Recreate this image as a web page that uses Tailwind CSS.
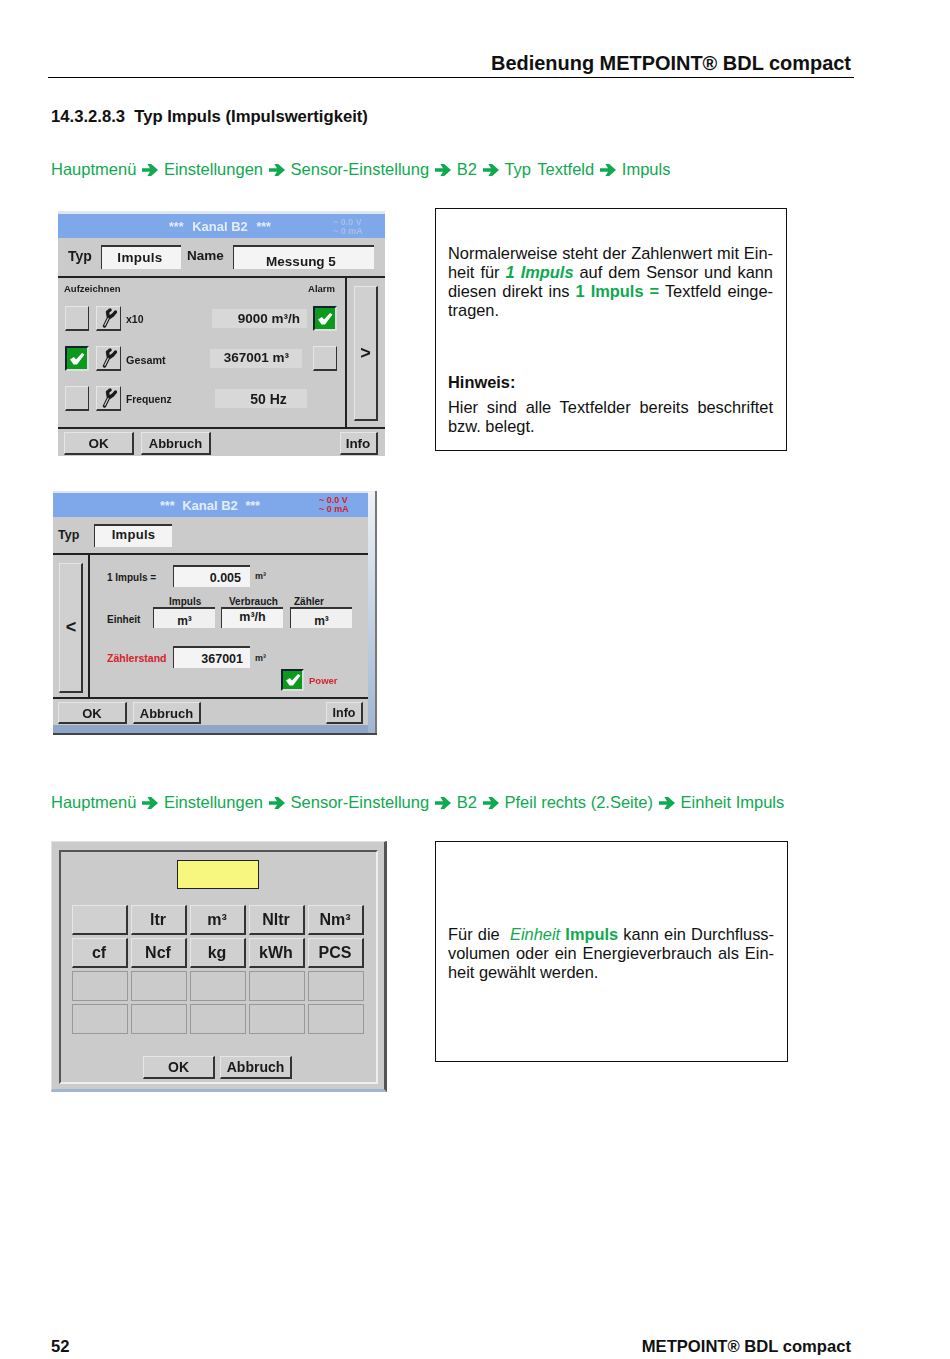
<!DOCTYPE html>
<html lang="de">
<head>
  <meta charset="UTF-8" />
  <title>Bedienung METPOINT BDL compact</title>
  <script src="https://cdn.jsdelivr.net/npm/@tailwindcss/browser@4"></script>
</head>
<body class="bg-white">
<div class="w-[950px] h-[1359px] flex flex-col font-['Liberation_Sans',Arial,sans-serif] text-[#111] overflow-hidden">

  <!-- Kopfzeile -->
  <div class="ml-[48px] w-[806px] h-[78px] flex items-end justify-end border-b border-black pr-[3px] pb-[2px]">
    <span class="text-[19.95px] leading-[23px] font-bold">Bedienung METPOINT® BDL compact</span>
  </div>

  <h2 class="ml-[51px] mt-[29px] text-[16.65px] leading-[19px] font-bold">14.3.2.8.3&nbsp; Typ Impuls (Impulswertigkeit)</h2>

  <!-- Pfad 1 -->
  <div class="ml-[51px] mt-[34px] h-[19px] flex items-center gap-[5.8px] text-[16.5px] leading-[19px] text-[#0fa950]">
    <span>Hauptmenü</span>
    <svg width="16" height="12" viewBox="0 0 16 12"><path d="M0 4.2h8L5.4 0h3.8L16 6l-6.8 6H5.4L8 7.8H0z" fill="#0fa950"/></svg>
    <span>Einstellungen</span>
    <svg width="16" height="12" viewBox="0 0 16 12"><path d="M0 4.2h8L5.4 0h3.8L16 6l-6.8 6H5.4L8 7.8H0z" fill="#0fa950"/></svg>
    <span>Sensor-Einstellung</span>
    <svg width="16" height="12" viewBox="0 0 16 12"><path d="M0 4.2h8L5.4 0h3.8L16 6l-6.8 6H5.4L8 7.8H0z" fill="#0fa950"/></svg>
    <span>B2</span>
    <svg width="16" height="12" viewBox="0 0 16 12"><path d="M0 4.2h8L5.4 0h3.8L16 6l-6.8 6H5.4L8 7.8H0z" fill="#0fa950"/></svg>
    <span class="[word-spacing:2px]">Typ Textfeld</span>
    <svg width="16" height="12" viewBox="0 0 16 12"><path d="M0 4.2h8L5.4 0h3.8L16 6l-6.8 6H5.4L8 7.8H0z" fill="#0fa950"/></svg>
    <span>Impuls</span>
  </div>

  <!-- Abschnitt 1 -->
  <div class="mt-[29px] flex items-start">
    <!-- Bildschirm Kanal B2, Seite 1 -->
    <div class="ml-[58px] mt-[3px] w-[327px] h-[245px] bg-[#cbcbcb] border-t-[3px] border-[#dfe6f2] flex flex-col text-[#1a1a1a] blur-[0.3px]">
      <div class="h-[24px] bg-[#7fa8ea] flex items-center">
        <div class="ml-[111px] w-[164px] pr-[62px] pt-[2px] flex justify-between items-center font-bold text-[#e4ecfa]">
          <span class="text-[12.5px]">***</span><span class="text-[13px]">Kanal B2</span><span class="text-[12.5px]">***</span>
        </div>
        <div class="pt-[1px] text-[9px] leading-[9px] font-bold text-[#a8bfe6]"><p>~ 0.0 V</p><p>~ 0 mA</p></div>
      </div>
      <div class="h-[40px] flex items-center border-b-2 border-[#222]">
        <span class="ml-[10px] w-[33px] pb-[2px] text-[14px] font-bold">Typ</span>
        <div class="w-[80px] h-[24px] bg-[#f4f4f4] border-t-2 border-l border-[#333] flex items-center justify-center text-[13.5px] font-bold tracking-[0.3px] pr-[3px]">Impuls</div>
        <span class="ml-[6px] w-[46px] pb-[1px] text-[13.5px] font-bold">Name</span>
        <div class="w-[141px] h-[24px] bg-[#f4f4f4] border-t-2 border-l border-[#333] flex items-center justify-center text-[13.5px] font-bold pt-[8px] pr-[6px]">Messung 5</div>
      </div>
      <div class="h-[151px] flex border-b-2 border-[#222]">
        <div class="w-[289px] border-r-2 border-[#222] flex flex-col">
          <div class="mt-[5px] h-[12px] flex justify-between pl-[6px] pr-[10px] text-[9.5px] leading-[12px] font-bold"><span>Aufzeichnen</span><span>Alarm</span></div>
          <div class="mt-[11px] h-[25px] flex items-center">
            <div class="ml-[7px] w-[24px] h-[25px] bg-[#d0d0d0] border-r border-b-2 border-t border-l border-r-[#333] border-b-[#333] border-t-[#e6e6e6] border-l-[#e6e6e6]"></div>
            <div class="ml-[7px] w-[25px] h-[25px] bg-[#d0d0d0] border-r border-b-2 border-t border-l border-r-[#333] border-b-[#333] border-t-[#e6e6e6] border-l-[#e6e6e6] flex items-center justify-center">
              <svg width="16" height="20" viewBox="0 0 16 20" fill="none" stroke-linecap="round" stroke-linejoin="round"><path d="M3.5 18 L7.5 10 L6.5 4 L9 2 M7.5 10 L12 7 L14.5 4" stroke="#1c1c1c" stroke-width="3.4"/><path d="M3.8 17.2 L7.2 10.4" stroke="#d8d8d8" stroke-width="1.1"/></svg>
            </div>
            <span class="ml-[5px] w-[86px] pt-[3px] text-[10.5px] font-bold">x10</span>
            <div class="w-[95px] h-[19px] bg-[#d8d8d8] flex items-center justify-end pr-[7px] pt-[1px] text-[13.5px] font-bold">9000 m³/h</div>
            <div class="ml-[6px] w-[24px] h-[25px] bg-[#0b9a1c] border-2 border-[#123] border-r-[#ddd] border-b-[#ddd] flex items-center justify-center">
              <svg width="16" height="13" viewBox="0 0 16 13"><path d="M1 7.5 L5 5 L7 7.5 L13 1 L15.5 2.5 L8 12.5 L4.5 12.5z" fill="#fff"/></svg>
            </div>
          </div>
          <div class="mt-[15px] h-[25px] flex items-center">
            <div class="ml-[7px] w-[24px] h-[25px] bg-[#0b9a1c] border-2 border-[#123] border-r-[#ddd] border-b-[#ddd] flex items-center justify-center">
              <svg width="16" height="13" viewBox="0 0 16 13"><path d="M1 7.5 L5 5 L7 7.5 L13 1 L15.5 2.5 L8 12.5 L4.5 12.5z" fill="#fff"/></svg>
            </div>
            <div class="ml-[7px] w-[25px] h-[25px] bg-[#d0d0d0] border-r border-b-2 border-t border-l border-r-[#333] border-b-[#333] border-t-[#e6e6e6] border-l-[#e6e6e6] flex items-center justify-center">
              <svg width="16" height="20" viewBox="0 0 16 20" fill="none" stroke-linecap="round" stroke-linejoin="round"><path d="M3.5 18 L7.5 10 L6.5 4 L9 2 M7.5 10 L12 7 L14.5 4" stroke="#1c1c1c" stroke-width="3.4"/><path d="M3.8 17.2 L7.2 10.4" stroke="#d8d8d8" stroke-width="1.1"/></svg>
            </div>
            <span class="ml-[5px] w-[84px] pt-[3px] text-[10.8px] font-bold">Gesamt</span>
            <div class="w-[92px] h-[19px] bg-[#d8d8d8] flex items-center justify-end pr-[13px] text-[13.5px] font-bold">367001 m³</div>
            <div class="ml-[11px] w-[24px] h-[25px] bg-[#d0d0d0] border-r border-b-2 border-t border-l border-r-[#333] border-b-[#333] border-t-[#e6e6e6] border-l-[#e6e6e6]"></div>
          </div>
          <div class="mt-[15px] h-[25px] flex items-center">
            <div class="ml-[7px] w-[24px] h-[25px] bg-[#d0d0d0] border-r border-b-2 border-t border-l border-r-[#333] border-b-[#333] border-t-[#e6e6e6] border-l-[#e6e6e6]"></div>
            <div class="ml-[7px] w-[25px] h-[25px] bg-[#d0d0d0] border-r border-b-2 border-t border-l border-r-[#333] border-b-[#333] border-t-[#e6e6e6] border-l-[#e6e6e6] flex items-center justify-center">
              <svg width="16" height="20" viewBox="0 0 16 20" fill="none" stroke-linecap="round" stroke-linejoin="round"><path d="M3.5 18 L7.5 10 L6.5 4 L9 2 M7.5 10 L12 7 L14.5 4" stroke="#1c1c1c" stroke-width="3.4"/><path d="M3.8 17.2 L7.2 10.4" stroke="#d8d8d8" stroke-width="1.1"/></svg>
            </div>
            <span class="ml-[5px] w-[89px] pt-[3px] text-[10.3px] font-bold">Frequenz</span>
            <div class="w-[92px] h-[19px] bg-[#d8d8d8] flex items-center justify-center pl-[15px] pt-[1px] text-[14px] font-bold">50 Hz</div>
          </div>
        </div>
        <div class="ml-[7px] mt-[8px] w-[24px] h-[135px] bg-[#d0d0d0] border-t border-l border-r-2 border-b-2 border-t-[#e6e6e6] border-l-[#e6e6e6] border-r-[#333] border-b-[#333] flex items-center justify-center text-[18px] font-bold">&gt;</div>
      </div>
      <div class="flex-1 flex items-start pt-[3px]">
        <div class="ml-[6px] w-[70px] h-[23px] bg-[#d0d0d0] border-t border-l border-r-2 border-b-2 border-t-[#e6e6e6] border-l-[#e6e6e6] border-r-[#333] border-b-[#333] flex items-center justify-center pt-[2px] text-[13.5px] font-bold">OK</div>
        <div class="ml-[7px] w-[70px] h-[23px] bg-[#d0d0d0] border-t border-l border-r-2 border-b-2 border-t-[#e6e6e6] border-l-[#e6e6e6] border-r-[#333] border-b-[#333] flex items-center justify-center pt-[2px] text-[13px] font-bold">Abbruch</div>
        <div class="ml-[129px] w-[38px] h-[23px] bg-[#d0d0d0] border-t border-l border-r-2 border-b-2 border-t-[#e6e6e6] border-l-[#e6e6e6] border-r-[#333] border-b-[#333] flex items-center justify-center pt-[2px] text-[13.5px] font-bold pr-[1px]">Info</div>
      </div>
    </div>

    <!-- Hinweis rechts -->
    <div class="ml-[50px] w-[352px] h-[243px] border border-[#111] pl-[12px] pr-[13px] pt-[35px] text-[16.4px] leading-[19px]">
      <p class="[text-align-last:justify]">Normalerweise steht der Zahlenwert mit Ein-</p>
      <p class="[text-align-last:justify]">heit für <b class="italic text-[#0fa950]">1 Impuls</b> auf dem Sensor und kann</p>
      <p class="[text-align-last:justify]">diesen direkt ins <b class="text-[#0fa950]">1 Impuls =</b> Textfeld einge-</p>
      <p>tragen.</p>
      <p class="mt-[53px] font-bold">Hinweis:</p>
      <p class="mt-[6px] [text-align-last:justify]">Hier sind alle Textfelder bereits beschriftet</p>
      <p>bzw. belegt.</p>
    </div>
  </div>

  <!-- Bildschirm Kanal B2, Seite 2 -->
  <div class="ml-[53px] mt-[35px] w-[324px] h-[244px] flex border-b-2 border-b-[#444] text-[#1a1a1a] blur-[0.3px]">
    <div class="w-[315px] bg-[#cbcbcb] border-t-2 border-[#dfe6f2] flex flex-col">
      <div class="h-[24px] bg-[#7fa8ea] flex items-center">
        <div class="ml-[107px] w-[159px] pr-[59px] pt-[2px] flex justify-between items-center font-bold text-[#e4ecfa]">
          <span class="text-[12.5px]">***</span><span class="text-[13px]">Kanal B2</span><span class="text-[12.5px]">***</span>
        </div>
        <div class="text-[9px] leading-[9px] font-bold text-[#d8202a]"><p>~ 0.0 V</p><p>~ 0 mA</p></div>
      </div>
      <div class="h-[38px] flex items-center border-b-2 border-[#222]">
        <span class="ml-[5px] w-[36px] text-[12.5px] font-bold">Typ</span>
        <div class="w-[78px] h-[23px] bg-[#f4f4f4] border-t-2 border-l border-[#333] flex items-center justify-center text-[13px] font-bold tracking-[0.3px] pb-[3px]">Impuls</div>
      </div>
      <div class="h-[144px] flex border-b-2 border-[#222]">
        <div class="w-[37px] border-r-2 border-[#222] pl-[6px] pt-[8px]">
          <div class="w-[24px] h-[130px] bg-[#d0d0d0] border-t border-l border-r-2 border-b-2 border-t-[#e6e6e6] border-l-[#e6e6e6] border-r-[#333] border-b-[#333] flex items-center justify-center pl-[1px] text-[18px] font-bold">&lt;</div>
        </div>
        <div class="flex-1 flex flex-col pl-[17px]">
          <div class="mt-[9px] h-[23px] flex items-center">
            <span class="w-[66px] pt-[3px] text-[10px] font-bold">1 Impuls =</span>
            <div class="w-[77px] h-[22px] bg-[#f4f4f4] border-t-2 border-l border-[#333] flex items-center justify-end pr-[9px] pt-[3px] text-[12.5px] font-bold">0.005</div>
            <span class="ml-[5px] pt-[3px] text-[9px] font-bold">m³</span>
          </div>
          <div class="mt-[9px] h-[10px] flex text-[10px] leading-[12px] font-bold">
            <span class="ml-[62px] w-[60px]">Impuls</span>
            <span class="w-[65px]">Verbrauch</span>
            <span>Zähler</span>
          </div>
          <div class="h-[22px] flex items-center">
            <span class="w-[46px] pt-[4px] text-[10px] font-bold">Einheit</span>
            <div class="w-[62px] h-[21px] bg-[#f0f0f0] border-t-2 border-l border-[#333] flex items-center justify-center pt-[5px] text-[12px] font-bold">m³</div>
            <div class="ml-[6px] w-[62px] h-[21px] bg-[#f4f4f4] border-t-2 border-l border-[#333] flex items-center justify-center text-[12.5px] font-bold pb-[1px]">m³/h</div>
            <div class="ml-[7px] w-[62px] h-[21px] bg-[#f0f0f0] border-t-2 border-l border-[#333] flex items-center justify-center pt-[5px] text-[12px] font-bold">m³</div>
          </div>
          <div class="mt-[17px] h-[23px] flex items-center">
            <span class="w-[66px] pt-[4px] text-[10.5px] font-bold text-[#d8202a]">Zählerstand</span>
            <div class="w-[77px] h-[22px] bg-[#f4f4f4] border-t-2 border-l border-[#333] flex items-center justify-end pr-[7px] pt-[3px] text-[12.5px] font-bold">367001</div>
            <span class="ml-[5px] pt-[4px] text-[9px] font-bold">m³</span>
          </div>
          <div class="h-[23px] flex items-center">
            <div class="ml-[174px] w-[23px] h-[22px] bg-[#0b9a1c] border-2 border-[#123] border-r-[#ddd] border-b-[#ddd] flex items-center justify-center">
              <svg width="16" height="13" viewBox="0 0 16 13"><path d="M1 7.5 L5 5 L7 7.5 L13 1 L15.5 2.5 L8 12.5 L4.5 12.5z" fill="#fff"/></svg>
            </div>
            <span class="ml-[5px] pt-[3px] text-[9.5px] font-bold text-[#d8202a]">Power</span>
          </div>
        </div>
      </div>
      <div class="h-[26px] flex items-start pt-[3px]">
        <div class="ml-[5px] w-[69px] h-[22px] bg-[#d0d0d0] border-t border-l border-r-2 border-b-2 border-t-[#e6e6e6] border-l-[#e6e6e6] border-r-[#333] border-b-[#333] flex items-center justify-center pt-[2px] text-[13px] font-bold">OK</div>
        <div class="ml-[6px] w-[68px] h-[22px] bg-[#d0d0d0] border-t border-l border-r-2 border-b-2 border-t-[#e6e6e6] border-l-[#e6e6e6] border-r-[#333] border-b-[#333] flex items-center justify-center pt-[2px] text-[13px] font-bold">Abbruch</div>
        <div class="ml-[125px] w-[37px] h-[22px] bg-[#d0d0d0] border-t border-l border-r-2 border-b-2 border-t-[#e6e6e6] border-l-[#e6e6e6] border-r-[#333] border-b-[#333] flex items-center justify-center pt-[2px] text-[12.5px] font-bold">Info</div>
      </div>
      <div class="flex-1 bg-[#8fa6c8]"></div>
    </div>
    <div class="w-[9px] border-r-2 border-r-[#777] bg-gradient-to-b from-[#eef2f6] to-[#9fb6d0]"></div>
  </div>

  <!-- Pfad 2 -->
  <div class="ml-[51px] mt-[58px] h-[19px] flex items-center gap-[5.8px] text-[16.5px] leading-[19px] text-[#0fa950]">
    <span>Hauptmenü</span>
    <svg width="16" height="12" viewBox="0 0 16 12"><path d="M0 4.2h8L5.4 0h3.8L16 6l-6.8 6H5.4L8 7.8H0z" fill="#0fa950"/></svg>
    <span>Einstellungen</span>
    <svg width="16" height="12" viewBox="0 0 16 12"><path d="M0 4.2h8L5.4 0h3.8L16 6l-6.8 6H5.4L8 7.8H0z" fill="#0fa950"/></svg>
    <span>Sensor-Einstellung</span>
    <svg width="16" height="12" viewBox="0 0 16 12"><path d="M0 4.2h8L5.4 0h3.8L16 6l-6.8 6H5.4L8 7.8H0z" fill="#0fa950"/></svg>
    <span>B2</span>
    <svg width="16" height="12" viewBox="0 0 16 12"><path d="M0 4.2h8L5.4 0h3.8L16 6l-6.8 6H5.4L8 7.8H0z" fill="#0fa950"/></svg>
    <span>Pfeil rechts (2.Seite)</span>
    <svg width="16" height="12" viewBox="0 0 16 12"><path d="M0 4.2h8L5.4 0h3.8L16 6l-6.8 6H5.4L8 7.8H0z" fill="#0fa950"/></svg>
    <span>Einheit Impuls</span>
  </div>

  <!-- Abschnitt 3 -->
  <div class="mt-[29px] flex items-start">
    <div class="ml-[51px] w-[336px] h-[251px] bg-[#cbcbcb] border-t border-l border-[#dde3ec] border-r-[3px] border-r-[#555] border-b-[3px] border-b-[#9fb6d0] pt-[8px] px-[7px] pb-[7px] text-[#1a1a1a] blur-[0.3px]">
      <div class="w-[319px] h-[234px] border-2 border-t-[#555] border-l-[#555] border-r-[#eee] border-b-[#eee] flex flex-col items-center pr-[2px]">
        <div class="mt-[8px] w-[82px] h-[29px] bg-[#f7f77f] border border-[#222]"></div>
        <div class="mt-[16px] grid grid-cols-[56px_56px_56px_56px_56px] gap-x-[3px] gap-y-[3px] text-[16px] font-bold">
          <div class="h-[30px] bg-[#d0d0d0] border-t border-l border-r-2 border-b-2 border-t-[#e6e6e6] border-l-[#e6e6e6] border-r-[#333] border-b-[#333]"></div>
          <div class="h-[30px] bg-[#d0d0d0] border-t border-l border-r-2 border-b-2 border-t-[#e6e6e6] border-l-[#e6e6e6] border-r-[#333] border-b-[#333] flex items-center justify-center">ltr</div>
          <div class="h-[30px] bg-[#d0d0d0] border-t border-l border-r-2 border-b-2 border-t-[#e6e6e6] border-l-[#e6e6e6] border-r-[#333] border-b-[#333] flex items-center justify-center">m³</div>
          <div class="h-[30px] bg-[#d0d0d0] border-t border-l border-r-2 border-b-2 border-t-[#e6e6e6] border-l-[#e6e6e6] border-r-[#333] border-b-[#333] flex items-center justify-center">Nltr</div>
          <div class="h-[30px] bg-[#d0d0d0] border-t border-l border-r-2 border-b-2 border-t-[#e6e6e6] border-l-[#e6e6e6] border-r-[#333] border-b-[#333] flex items-center justify-center">Nm³</div>
          <div class="h-[30px] bg-[#d0d0d0] border-t border-l border-r-2 border-b-2 border-t-[#e6e6e6] border-l-[#e6e6e6] border-r-[#333] border-b-[#333] flex items-center justify-center">cf</div>
          <div class="h-[30px] bg-[#d0d0d0] border-t border-l border-r-2 border-b-2 border-t-[#e6e6e6] border-l-[#e6e6e6] border-r-[#333] border-b-[#333] flex items-center justify-center">Ncf</div>
          <div class="h-[30px] bg-[#d0d0d0] border-t border-l border-r-2 border-b-2 border-t-[#e6e6e6] border-l-[#e6e6e6] border-r-[#333] border-b-[#333] flex items-center justify-center">kg</div>
          <div class="h-[30px] bg-[#d0d0d0] border-t border-l border-r-2 border-b-2 border-t-[#e6e6e6] border-l-[#e6e6e6] border-r-[#333] border-b-[#333] flex items-center justify-center">kWh</div>
          <div class="h-[30px] bg-[#d0d0d0] border-t border-l border-r-2 border-b-2 border-t-[#e6e6e6] border-l-[#e6e6e6] border-r-[#333] border-b-[#333] flex items-center justify-center">PCS</div>
          <div class="h-[30px] border border-[#999]"></div>
          <div class="h-[30px] border border-[#999]"></div>
          <div class="h-[30px] border border-[#999]"></div>
          <div class="h-[30px] border border-[#999]"></div>
          <div class="h-[30px] border border-[#999]"></div>
          <div class="h-[30px] border border-[#999]"></div>
          <div class="h-[30px] border border-[#999]"></div>
          <div class="h-[30px] border border-[#999]"></div>
          <div class="h-[30px] border border-[#999]"></div>
          <div class="h-[30px] border border-[#999]"></div>
        </div>
        <div class="mt-[22px] flex gap-[5px] text-[14px] font-bold">
          <div class="w-[72px] h-[23px] bg-[#d0d0d0] border-t border-l border-r-2 border-b-2 border-t-[#e6e6e6] border-l-[#e6e6e6] border-r-[#333] border-b-[#333] flex items-center justify-center pt-[1px]">OK</div>
          <div class="w-[72px] h-[23px] bg-[#d0d0d0] border-t border-l border-r-2 border-b-2 border-t-[#e6e6e6] border-l-[#e6e6e6] border-r-[#333] border-b-[#333] flex items-center justify-center pt-[1px]">Abbruch</div>
        </div>
      </div>
    </div>

    <div class="ml-[48px] w-[353px] h-[221px] border border-[#111] pl-[12px] pr-[13px] pt-[83px] text-[16.4px] leading-[19px]">
      <p class="[text-align-last:justify]">Für die&nbsp; <i class="text-[#0fa950]">Einheit</i> <b class="text-[#0fa950]">Impuls</b> kann ein Durchfluss-</p>
      <p class="[text-align-last:justify]">volumen oder ein Energieverbrauch als Ein-</p>
      <p>heit gewählt werden.</p>
    </div>
  </div>

  <!-- Fusszeile -->
  <div class="mt-auto mb-[3px] ml-[51px] w-[800px] flex justify-between text-[16.6px] leading-[19px] font-bold">
    <span>52</span>
    <span>METPOINT® BDL compact</span>
  </div>
</div>
</body>
</html>
